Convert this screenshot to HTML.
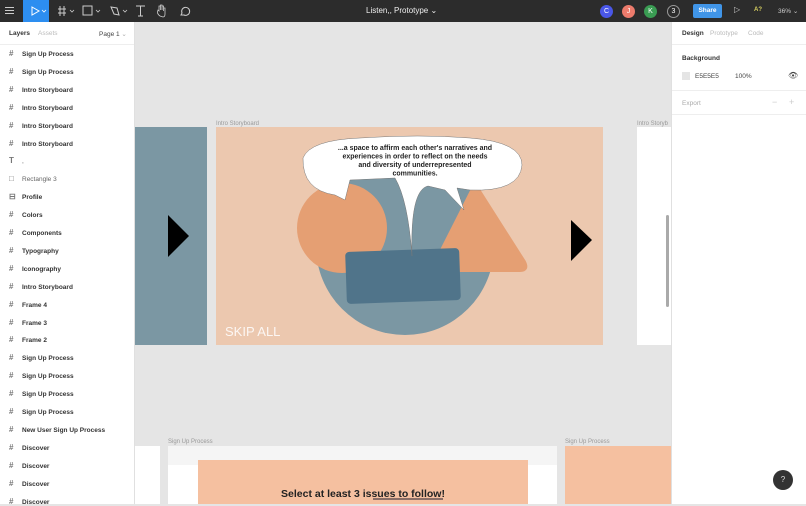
<!DOCTYPE html>
<html><head><meta charset="utf-8"><style>
*{margin:0;padding:0;box-sizing:border-box}
body{width:806px;height:504px;overflow:hidden;position:relative;font-family:"Liberation Sans",sans-serif;background:#e5e5e5}
.top{position:absolute;left:0;top:0;width:806px;height:22px;background:#2c2c2c;color:#fff}
.side{position:absolute;left:0;top:22px;width:135px;height:482px;background:#fff;border-right:1px solid #e0e0e0}
.rp{position:absolute;left:671px;top:22px;width:135px;height:482px;background:#fff;border-left:1px solid #e0e0e0}
.it{position:absolute;left:9px;font-size:6.5px;font-weight:bold;color:#333;white-space:nowrap}
.it i{display:inline-block;width:10px;font-style:normal;color:#777;font-weight:bold;font-size:8px;margin-right:3px}
.t{position:absolute;white-space:nowrap}
</style></head><body>
<div class="top">
 <div class="t" style="left:5px;top:5px;width:9px;height:11px"><div style="border-top:1px solid #ccc;border-bottom:1px solid #ccc;height:7px;margin-top:2px"></div><div style="border-top:1px solid #ccc;margin-top:-4px"></div></div>
 <div style="position:absolute;left:23px;top:0;width:26px;height:22px;background:#2d8ef0"></div>
 <svg class="t" style="left:0;top:0" width="200" height="22"><path d="M32 7 L39 11 L32 15 Z" fill="none" stroke="#fff" stroke-width="1"/><path d="M42 10l2 2 2-2" fill="none" stroke="#fff" stroke-width=".8"/>
 <path d="M60 6v10M64 6v10M58 9h8M58 13h8" stroke="#ccc" stroke-width="1"/><path d="M70 10l2 2 2-2" fill="none" stroke="#ccc" stroke-width=".8"/>
 <rect x="83" y="6" width="9" height="9" fill="none" stroke="#ccc"/><path d="M96 10l2 2 2-2" fill="none" stroke="#ccc" stroke-width=".8"/>
 <path d="M111 7l6 1 2 7-5-1z" fill="none" stroke="#ccc"/><path d="M123 10l2 2 2-2" fill="none" stroke="#ccc" stroke-width=".8"/>
 <path d="M136 6h9M140.5 6v10M138 16h5" stroke="#ccc" stroke-width="1"/>
 <path d="M160 16c-3-2-3-4-2-6l1 1v-5h1.5v4v-5h1.5v5v-4h1.5v5v-3h1.5v6c0 2-1 3-2 3z" fill="none" stroke="#ccc" stroke-width=".8"/>
 <path d="M181 15l1-2a4 4 0 1 1 2 2z" fill="none" stroke="#ccc"/></svg>
 <div class="t" style="left:366px;top:6px;font-size:8px;color:#eee">Listen,, Prototype ⌄</div>
 <div class="t" style="left:600px;top:5px;width:13px;height:13px;border-radius:50%;background:#4a57e8;font-size:7px;text-align:center;line-height:13px">C</div>
 <div class="t" style="left:622px;top:5px;width:13px;height:13px;border-radius:50%;background:#ec7b6c;font-size:7px;text-align:center;line-height:13px">J</div>
 <div class="t" style="left:644px;top:5px;width:13px;height:13px;border-radius:50%;background:#3a9c53;font-size:7px;text-align:center;line-height:13px">K</div>
 <div class="t" style="left:667px;top:5px;width:13px;height:13px;border-radius:50%;border:1px solid #999;font-size:7px;text-align:center;line-height:11px">3</div>
 <div class="t" style="left:693px;top:4px;width:29px;height:14px;border-radius:2px;background:#4095e8;font-size:6.5px;font-weight:bold;text-align:center;line-height:14px">Share</div>
 <div class="t" style="left:734px;top:5px;font-size:8px;color:#ccc">▷</div>
 <div class="t" style="left:754px;top:7px;font-size:6px;color:#d8d060;font-weight:bold">A?</div>
 <div class="t" style="left:778px;top:7px;font-size:6.5px;color:#ccc">36% ⌄</div>
</div>
<div class="side">
 <div class="t" style="left:9px;top:8px;font-size:6.5px;font-weight:bold;color:#333">Layers</div>
 <div class="t" style="left:38px;top:8px;font-size:6.5px;color:#bbb">Assets</div>
 <div class="t" style="left:99px;top:8px;font-size:6.5px;color:#444">Page 1 <span style="color:#aaa">⌄</span></div>
 <div style="position:absolute;left:0;top:22px;width:134px;border-top:1px solid #eee"></div>
</div>
<div id="L"></div>
<div class="rp">
 <div class="t" style="left:10px;top:8px;font-size:6.5px;font-weight:bold;color:#333">Design</div>
 <div class="t" style="left:38px;top:8px;font-size:6.5px;color:#bbb">Prototype</div>
 <div class="t" style="left:76px;top:8px;font-size:6.5px;color:#bbb">Code</div>
 <div style="position:absolute;left:0;top:22px;width:135px;border-top:1px solid #eee"></div>
 <div class="t" style="left:10px;top:33px;font-size:6.5px;font-weight:bold;color:#333">Background</div>
 <div style="position:absolute;left:10px;top:50px;width:8px;height:8px;background:#e5e5e5"></div>
 <div class="t" style="left:23px;top:51px;font-size:6.5px;color:#444">E5E5E5</div>
 <div class="t" style="left:63px;top:51px;font-size:6.5px;color:#444">100%</div>
 <div class="t" style="left:116px;top:49px;font-size:8px;color:#444">👁</div>
 <div style="position:absolute;left:0;top:68px;width:135px;border-top:1px solid #eee"></div>
 <div class="t" style="left:10px;top:78px;font-size:6.5px;color:#aaa">Export</div>
 <div class="t" style="left:100px;top:75px;font-size:9px;color:#ccc">−</div>
 <div class="t" style="left:117px;top:75px;font-size:9px;color:#ccc">+</div>
 <div style="position:absolute;left:0;top:92px;width:135px;border-top:1px solid #eee"></div>
</div>
<svg style="position:absolute;left:135px;top:22px" width="536" height="482" viewBox="135 22 536 482">
 <text x="216" y="125" font-size="6" fill="#999" font-family="Liberation Sans">Intro Storyboard</text>
 <text x="637" y="125" font-size="6" fill="#999" font-family="Liberation Sans">Intro Storyb</text>
 <rect x="135" y="127" width="72" height="218" fill="#7b97a3"/>
 <path d="M168 215 L189 236 L168 257Z" fill="#000"/>
 <rect x="216" y="127" width="387" height="218" fill="#ecc8af"/>
 <rect x="637" y="127" width="34" height="218" fill="#fff"/>
 <circle cx="405" cy="246" r="89" fill="#7b97a3"/>
 <circle cx="342" cy="228" r="45" fill="#e59f73"/>
 <path d="M475 185 L524 262 Q528 270 520 270 L438 270 L432 270 Z" fill="#e59f73" stroke="#e59f73" stroke-width="4" stroke-linejoin="round"/>
 <rect x="346" y="250" width="114" height="52" rx="4" fill="#50748a" transform="rotate(-2 403 276)"/>
 <path d="M335 195 Q302 190 303 158 Q310 140 360 138 Q420 134 470 138 Q522 142 522 165 Q520 192 470 190 L457 188 L464 210 L445 190 L428 186 Q410 190 412 256 Q408 200 395 178 L350 180 L345 200 Z" fill="#fff" stroke="#777" stroke-width=".5"/>
 <g font-family="Liberation Sans" font-weight="bold" font-size="7" fill="#222" text-anchor="middle">
  <text x="415" y="150">...a space to affirm each other's narratives and</text>
  <text x="415" y="158.5">experiences in order to reflect on the needs</text>
  <text x="415" y="167">and diversity of underrepresented</text>
  <text x="415" y="175.5">communities.</text>
 </g>
 <path d="M571 220 L592 240 L571 261Z" fill="#000"/>
 <text x="225" y="336" font-size="13" fill="#fff" opacity=".85" font-family="Liberation Sans">SKIP ALL</text>
 <rect x="666" y="215" width="3" height="92" rx="1.5" fill="#aaa"/>
 <text x="168" y="443" font-size="6" fill="#999" font-family="Liberation Sans">Sign Up Process</text>
 <text x="565" y="443" font-size="6" fill="#999" font-family="Liberation Sans">Sign Up Process</text>
 <rect x="135" y="446" width="25" height="58" fill="#fff"/>
 <rect x="168" y="446" width="389" height="58" fill="#fff"/>
 <rect x="168" y="446" width="389" height="19" fill="#f5f5f5"/>
 <rect x="198" y="460" width="330" height="44" fill="#f5c0a0"/>
 <rect x="565" y="446" width="106" height="58" fill="#f5c0a0"/>
 <text x="363" y="497" font-size="10.5" font-weight="bold" fill="#222" text-anchor="middle" font-family="Liberation Sans">Select at least 3 issues to follow!</text>
 <rect x="373" y="498" width="70" height="2" fill="#8a6e66"/>
</svg>
<div class="t" style="left:773px;top:470px;width:20px;height:20px;border-radius:50%;background:#333;color:#ddd;font-size:8px;text-align:center;line-height:20px">?</div>
<script>
var n=["Sign Up Process","Sign Up Process","Intro Storyboard","Intro Storyboard","Intro Storyboard","Intro Storyboard","T,","R Rectangle 3","P Profile","Colors","Components","Typography","Iconography","Intro Storyboard","Frame 4","Frame 3","Frame 2","Sign Up Process","Sign Up Process","Sign Up Process","Sign Up Process","New User Sign Up Process","Discover","Discover","Discover","Discover"];
var h="";n.forEach(function(s,i){var y=49+i*17.9,ic="#",st="";
if(s=="T,"){ic="T";s=",";st="font-weight:normal;color:#666"}
else if(s.indexOf("R ")==0){ic="□";s=s.slice(2);st="font-weight:normal;color:#666"}
else if(s.indexOf("P ")==0){ic="⊟";s=s.slice(2)}
h+='<div class="it" style="top:'+y+'px;'+st+'"><i>'+ic+'</i>'+s+'</div>'});
document.getElementById("L").innerHTML=h;
</script>
</body></html>
